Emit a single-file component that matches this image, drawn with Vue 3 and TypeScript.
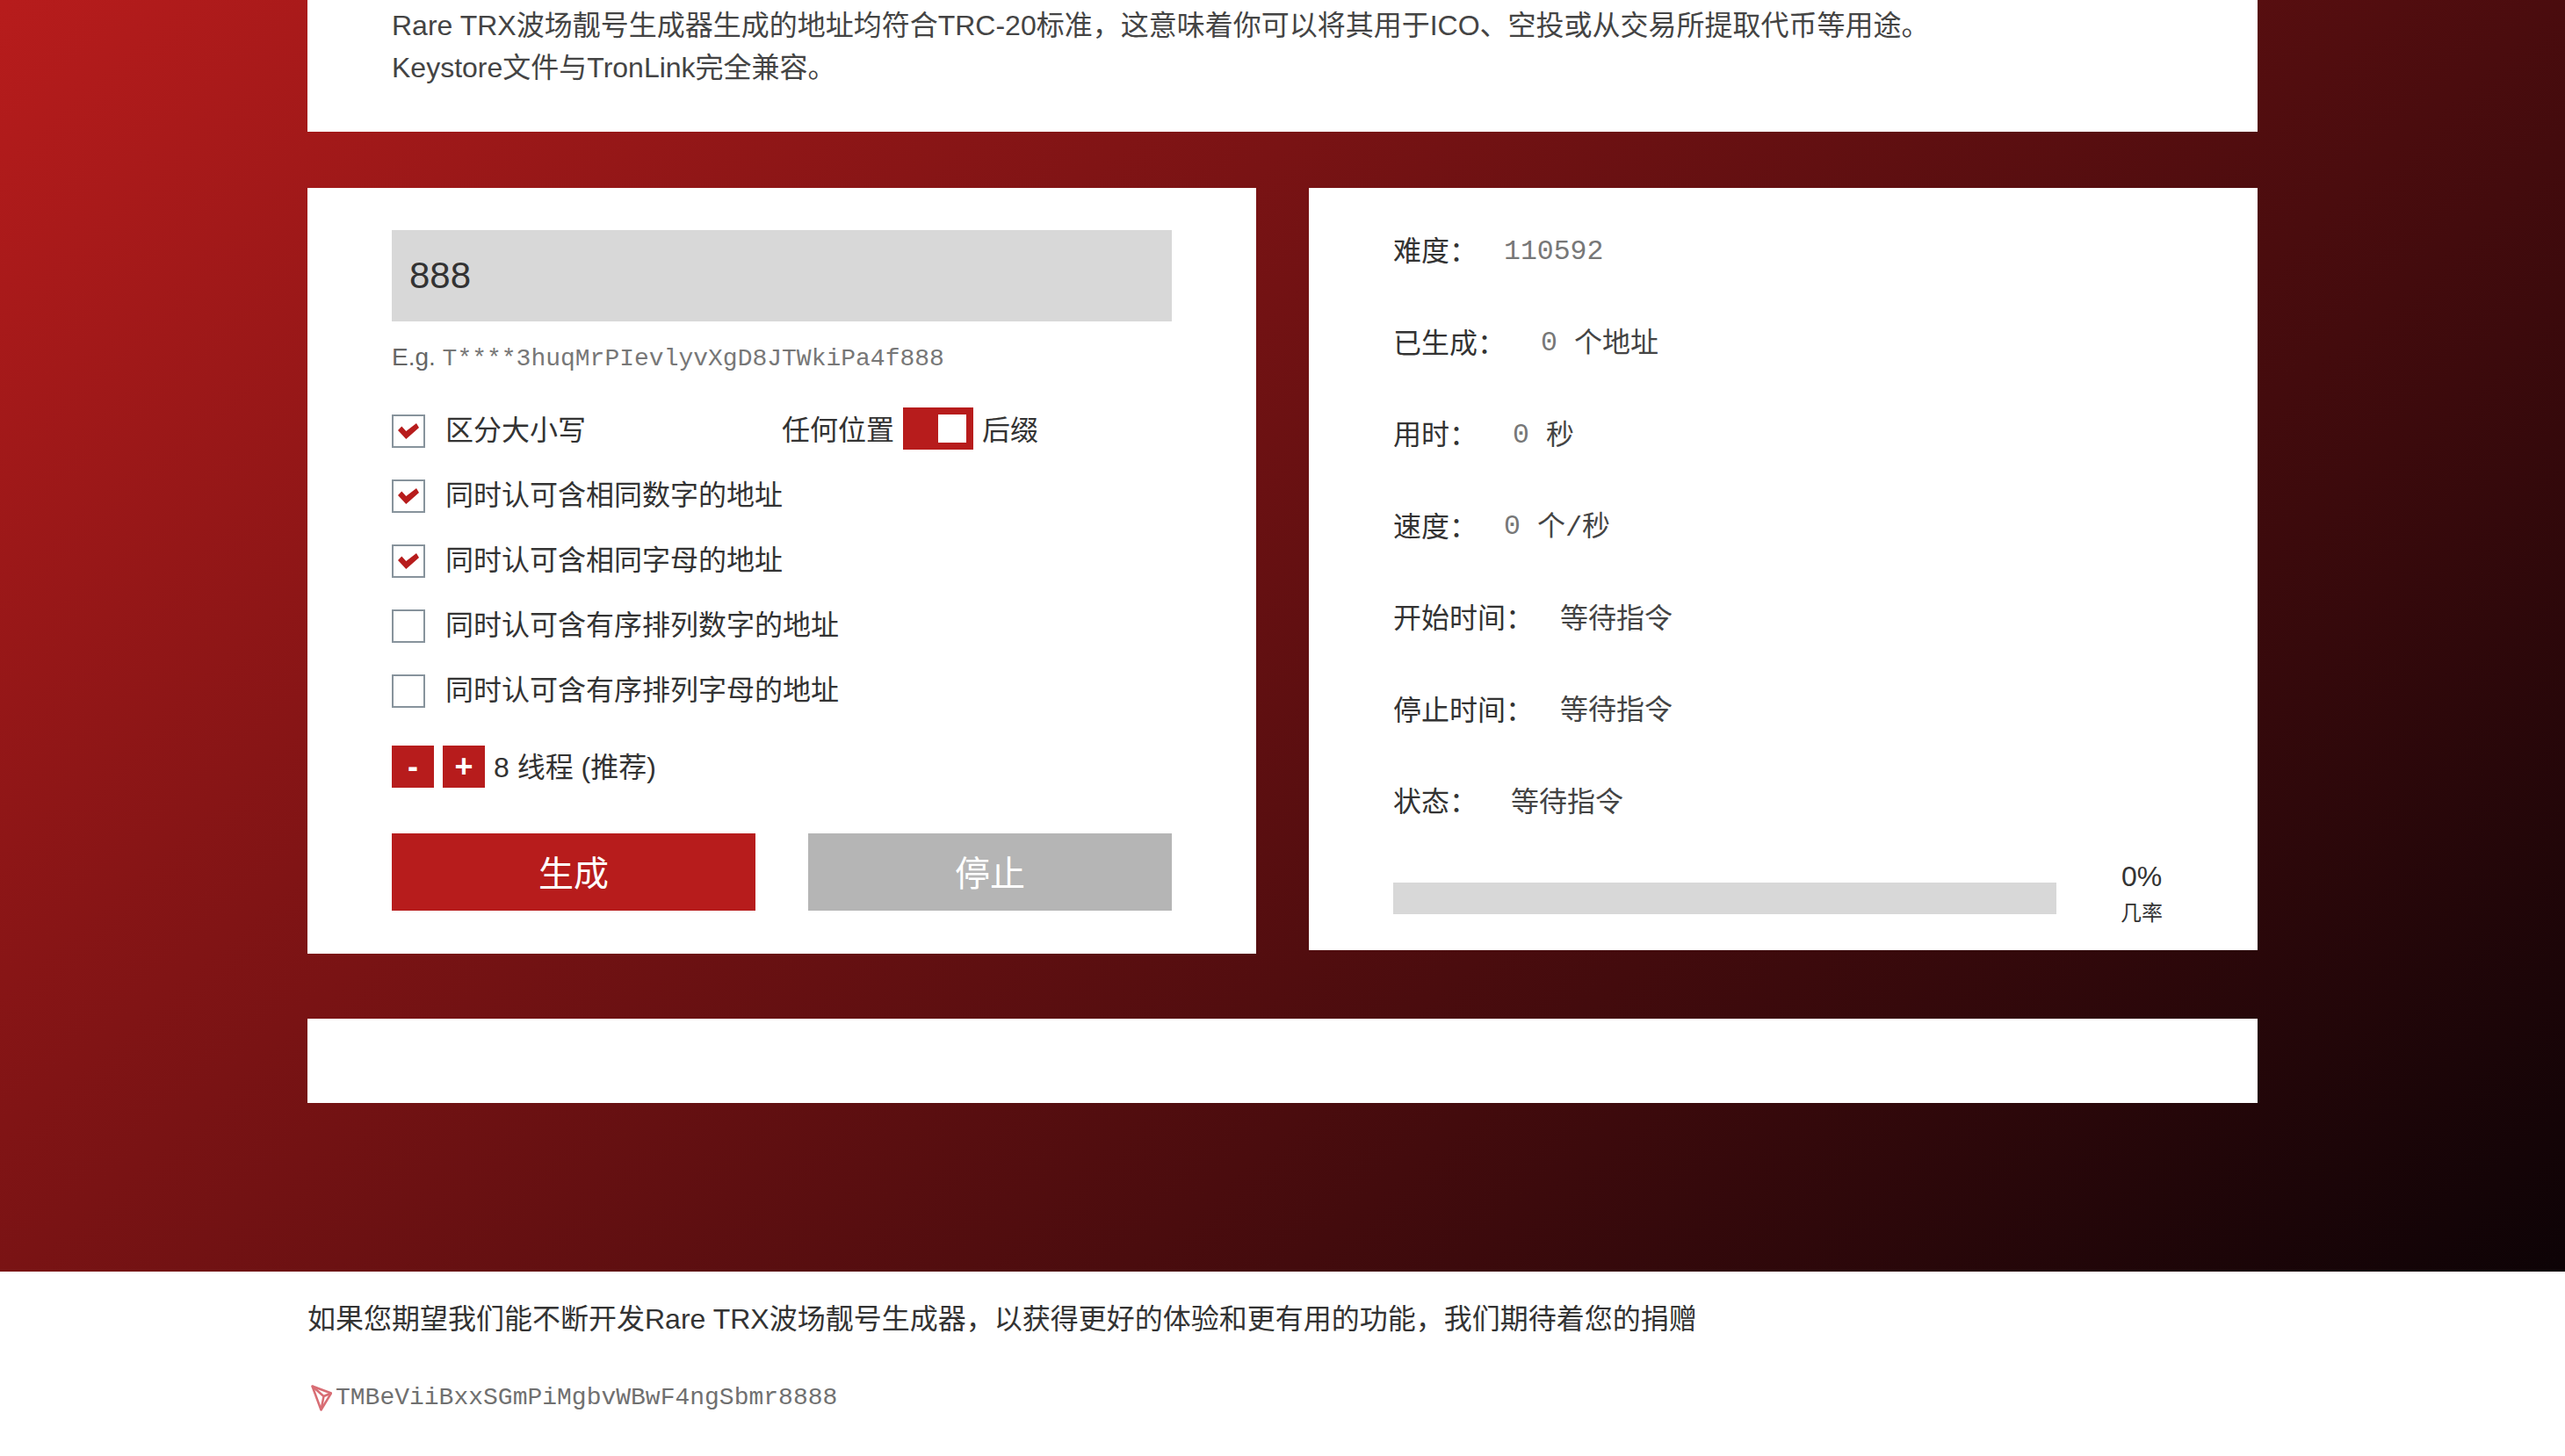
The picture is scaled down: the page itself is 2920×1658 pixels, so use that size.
<template>
  <div class="page">
    <div class="hero">
      <section class="card intro">
        <p>Rare TRX波场靓号生成器生成的地址均符合TRC-20标准，这意味着你可以将其用于ICO、空投或从交易所提取代币等用途。</p>
        <p>Keystore文件与TronLink完全兼容。</p>
      </section>

      <div class="columns">
        <section class="card form">
          <div class="prefix">888</div>
          <div class="example">E.g. <span class="mono">T****3huqMrPIevlyvXgD8JTWkiPa4f888</span></div>

          <div class="options">
            <div v-for="opt in options" :key="opt.label" class="option">
              <span class="check">
                <svg v-if="opt.checked" viewBox="0 0 24 18" width="24" height="18">
                  <path d="M0 8L4.300 3.500 9.300 9 21 0 24 5 9.300 18z" fill="#b71c1c" />
                </svg>
              </span>
              <span class="option-label">{{ opt.label }}</span>
              <span v-if="opt.position" class="position">
                <span class="position-text">任何位置</span>
                <span class="toggle"><i></i></span>
                <span class="position-text">后缀</span>
              </span>
            </div>
          </div>

          <div class="threads">
            <button class="step">-</button>
            <button class="step">+</button>
            <span class="thread-count">8 线程 (推荐)</span>
          </div>

          <div class="actions">
            <button class="action go">生成</button>
            <button class="action stop">停止</button>
          </div>
        </section>

        <section class="card stats">
          <div v-for="row in stats" :key="row.label" class="stat">
            <span class="stat-label" :style="{ width: row.width + 'px' }">{{ row.label }}</span>
            <span v-if="row.num" class="mono num">{{ row.num }}</span>
            <span class="stat-unit">{{ row.unit }}</span>
          </div>

          <div class="progress">
            <div class="bar"></div>
            <div class="odds">
              <div class="pct">0%</div>
              <div class="odds-label">几率</div>
            </div>
          </div>
        </section>
      </div>

      <section class="card empty"></section>
    </div>

    <footer class="donate">
      <p>如果您期望我们能不断开发Rare TRX波场靓号生成器，以获得更好的体验和更有用的功能，我们期待着您的捐赠</p>
      <div class="address">
        <svg viewBox="0 0 24 30" width="24" height="30" fill="none" stroke="#c8303a" stroke-width="2.500" stroke-linejoin="round" opacity="0.7">
          <path d="M1.500 1.500L23 9.500 11.500 28.500z" />
          <path d="M1.500 1.500L14.500 13 23 9.500M14.500 13L11.500 28.500" />
        </svg>
        <span class="mono">TMBeViiBxxSGmPiMgbvWBwF4ngSbmr8888</span>
      </div>
    </footer>
  </div>
</template>

<script setup lang="ts">
interface Option {
  label: string
  checked: boolean
  position?: boolean
}

interface Stat {
  label: string
  width: number
  num?: string
  unit?: string
}

const options: Option[] = [
  { label: '区分大小写', checked: true, position: true },
  { label: '同时认可含相同数字的地址', checked: true },
  { label: '同时认可含相同字母的地址', checked: true },
  { label: '同时认可含有序排列数字的地址', checked: false },
  { label: '同时认可含有序排列字母的地址', checked: false },
]

const stats: Stat[] = [
  { label: '难度：', width: 126, num: '110592' },
  { label: '已生成：', width: 168, num: '0', unit: '个地址' },
  { label: '用时：', width: 136, num: '0', unit: '秒' },
  { label: '速度：', width: 126, num: '0', unit: '个/秒' },
  { label: '开始时间：', width: 190, unit: '等待指令' },
  { label: '停止时间：', width: 190, unit: '等待指令' },
  { label: '状态：', width: 134, unit: '等待指令' },
]
</script>

<style>
html,
body {
  margin: 0;
  background: #fff;
}
</style>

<style scoped>
.page {
  height: 1658px;
  overflow: hidden;
  font-family: 'Liberation Sans', 'Noto Sans CJK SC', sans-serif;
  color: #333;
  font-size: 32px;
}

.hero {
  height: 1448px;
  box-sizing: border-box;
  padding: 0 350px;
  background: linear-gradient(138.500deg, #b71c1c 0%, #0d0306 100%);
}

.card {
  background: #fff;
}

.mono {
  font-family: 'Liberation Mono', monospace;
}

.intro {
  height: 150px;
  box-sizing: border-box;
  padding: 5px 96px 0;
  color: #444;
  line-height: 48px;
}

.intro p {
  margin: 0;
}

.columns {
  display: grid;
  grid-template-columns: 1080px 1080px;
  gap: 60px;
  align-items: start;
  margin-top: 64px;
}

.form {
  height: 872px;
  box-sizing: border-box;
  padding: 48px 96px 0;
}

.prefix {
  height: 104px;
  background: #d8d8d8;
  padding-left: 20px;
  line-height: 104px;
  font-size: 42px;
}

.example {
  height: 40px;
  margin-top: 21px;
  line-height: 40px;
  font-size: 28px;
  color: #666;
}

.example .mono {
  color: #777;
}

.options {
  margin-top: 27px;
}

.option {
  display: flex;
  align-items: center;
  height: 74px;
}

.check {
  flex: none;
  width: 38px;
  height: 38px;
  box-sizing: border-box;
  border: 2px solid #87939c;
  display: flex;
  align-items: center;
  justify-content: center;
}

.option-label {
  margin-left: 23px;
  padding-bottom: 8px;
}

.position {
  position: absolute;
  display: flex;
  align-items: center;
  margin-left: 444px;
  margin-bottom: 6px;
}

.position-text {
  padding-bottom: 2px;
}

.toggle {
  display: flex;
  justify-content: flex-end;
  align-items: center;
  width: 80px;
  height: 48px;
  box-sizing: border-box;
  padding-right: 8px;
  margin: 0 10px;
  background: #b71c1c;
}

.toggle i {
  width: 32px;
  height: 32px;
  background: #fff;
}

.threads {
  display: flex;
  align-items: center;
  margin-top: 24px;
}

.thread-count {
  padding-bottom: 4px;
}

.step {
  width: 48px;
  height: 48px;
  margin-right: 10px;
  border: 0;
  padding: 0;
  background: #b71c1c;
  color: #fff;
  font: bold 36px 'Liberation Sans', sans-serif;
}

.actions {
  display: flex;
  justify-content: space-between;
  margin-top: 51px;
}

.action {
  width: 414px;
  height: 88px;
  border: 0;
  padding: 0 0 2px;
  color: #fff;
  font: 40px 'Liberation Sans', 'Noto Sans CJK SC', sans-serif;
}

.go {
  background: #b71c1c;
}

.stop {
  background: #b5b5b5;
}

.stats {
  height: 868px;
  box-sizing: border-box;
  padding: 17px 96px 0;
}

.stat {
  display: flex;
  align-items: center;
  height: 104.500px;
  color: #444;
}

.stat-label {
  flex: none;
  color: #333;
}

.num {
  padding-top: 6px;
  font-size: 31.500px;
  color: #777;
  margin-right: 19px;
}

.stat-unit {
  font-family: 'Liberation Mono', 'Noto Sans CJK SC', monospace;
}

.progress {
  display: flex;
  align-items: center;
  margin-top: 11px;
}

.bar {
  width: 755px;
  height: 36px;
  margin-top: 14px;
  background: #d8d8d8;
}

.odds {
  margin-left: 73px;
  text-align: center;
}

.pct {
  line-height: 48px;
}

.odds-label {
  font-size: 24px;
  line-height: 36px;
}

.empty {
  height: 96px;
  margin-top: 74px;
}

.donate {
  padding: 30px 350px 0;
}

.donate p {
  margin: 0;
  line-height: 48px;
}

.address {
  display: flex;
  align-items: center;
  gap: 4px;
  margin: 50px 0 0 4px;
  font-size: 28px;
  color: #707070;
}
</style>
